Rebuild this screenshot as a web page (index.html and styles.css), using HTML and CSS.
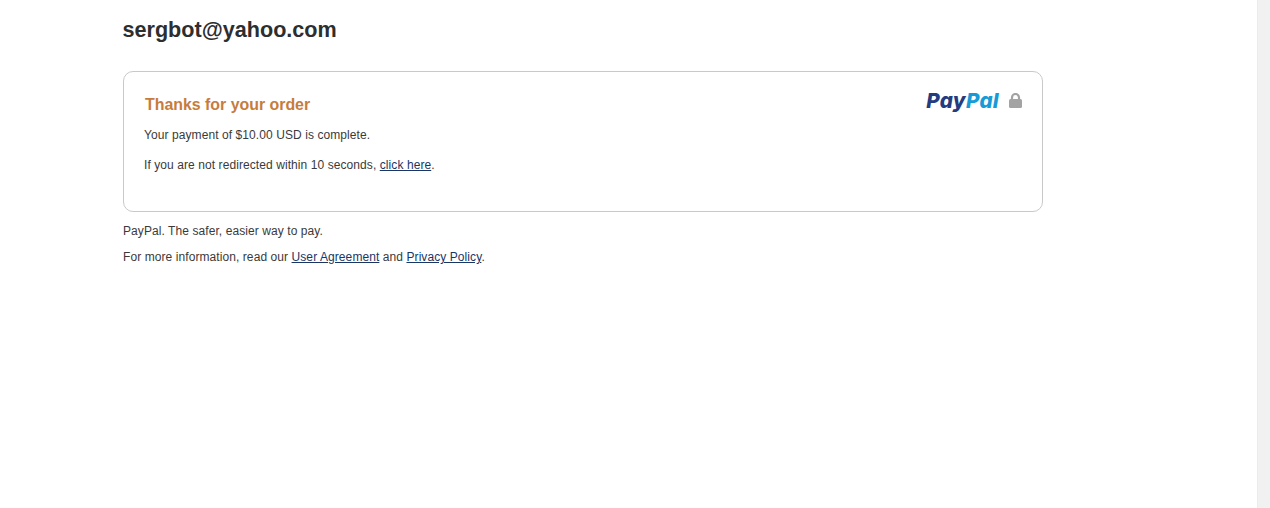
FILE: index.html
```html
<!DOCTYPE html>
<html lang="en">
<head>
<meta charset="utf-8">
<title>PayPal</title>
<link rel="stylesheet" href="styles.css">
</head>
<body>
<div class="page">
  <main class="main">
    <h1 class="email">sergbot@yahoo.com</h1>
    <section class="card">
      <div class="brand">
        <span class="logo"><span class="pay">Pay</span><span class="pal">Pal</span></span>
        <svg class="lock" width="13" height="15" viewBox="0 0 13 15" aria-hidden="true">
          <path d="M3 7V4.5a3.5 3.5 0 0 1 7 0V7" fill="none" stroke="#a3a3a3" stroke-width="2.2"/>
          <rect x="0" y="6" width="13" height="9" rx="1.5" fill="#a3a3a3"/>
        </svg>
      </div>
      <h2 class="title">Thanks for your order</h2>
      <p class="line">Your payment of $10.00 USD is complete.</p>
      <p class="line line-second">If you are not redirected within 10 seconds, <a href="#">click here</a>.</p>
    </section>
    <p class="foot">PayPal. The safer, easier way to pay.</p>
    <p class="foot foot-second">For more information, read our <a href="#">User Agreement</a> and <a href="#">Privacy Policy</a>.</p>
  </main>
  <div class="scrollbar"></div>
</div>
</body>
</html>
```

FILE: styles.css
```css
html, body {
  margin: 0;
  padding: 0;
  height: 100%;
  overflow: hidden;
  background: #fff;
}
body {
  font-family: "Liberation Sans", Arial, sans-serif;
  font-size: 12px;
  line-height: 16px;
  letter-spacing: 0.08px;
  color: #3a3a3a;
}
.page {
  display: flex;
  height: 508px;
}
.main {
  flex: 1;
  padding: 17px 0 0 123px;
}
.scrollbar {
  width: 13px;
  background: #f1f1f1;
  border-left: 1px solid #ececec;
  box-sizing: border-box;
}
.email {
  margin: 0 0 28px -0.5px;
  font-size: 21.6px;
  line-height: 26px;
  font-weight: 700;
  letter-spacing: 0;
  color: #2c2e2f;
}
.card {
  position: relative;
  box-sizing: border-box;
  width: 920px;
  height: 141px;
  padding: 23px 20px 0 20px;
  border: 1px solid #c9c9c9;
  border-radius: 10px;
}
.brand {
  position: absolute;
  top: 21px;
  right: 20px;
  display: flex;
  align-items: flex-start;
  gap: 10px;
}
.logo {
  margin-top: -4px;
  font-family: "Inter", "Liberation Sans", sans-serif;
  font-size: 20.6px;
  line-height: 24px;
  font-weight: 800;
  font-style: italic;
  letter-spacing: 0.3px;
}
.pay { color: #253b80; }
.pal { color: #179bd7; }
.title {
  margin: 0 0 12px 1px;
  font-size: 15.9px;
  line-height: 20px;
  font-weight: 700;
  letter-spacing: 0;
  color: #c67c3e;
}
.line {
  margin: 0;
}
.line-second {
  margin-top: 14px;
}
.foot {
  margin: 11px 0 0;
}
.foot-second {
  margin-top: 10px;
}
a {
  color: #1a3665;
  text-decoration: underline;
}
```
